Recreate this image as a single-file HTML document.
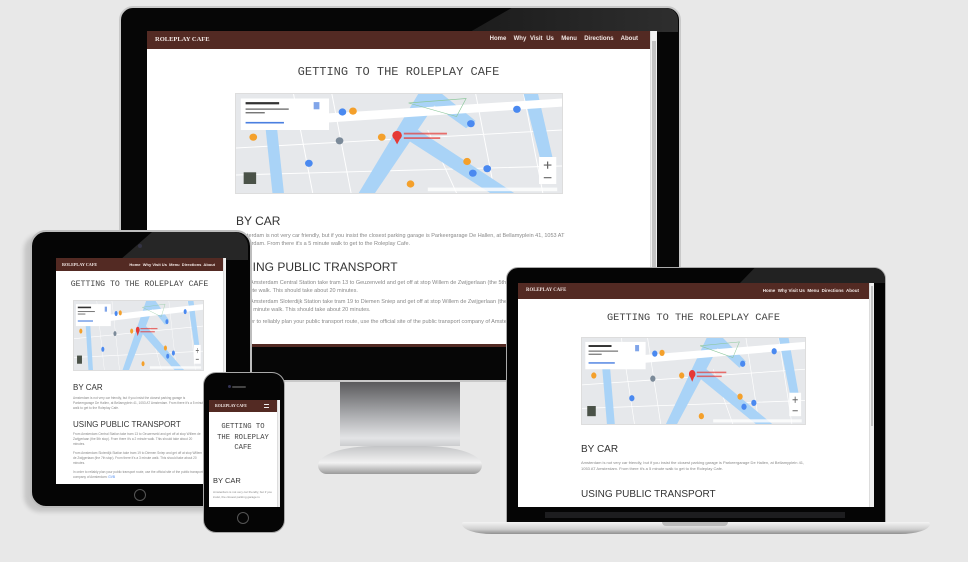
<!DOCTYPE html>
<html><head><meta charset="utf-8">
<style>
*{margin:0;padding:0;box-sizing:border-box}
html,body{width:968px;height:562px;overflow:hidden;background:#e8e8e8;font-family:"Liberation Sans",sans-serif}
.abs{position:absolute}
.scr{position:absolute;background:#fff;overflow:hidden}
.nav{position:absolute;left:0;top:0;right:0;background:#532a23;color:#f3e9e6}
.brand{position:absolute;font-family:"Liberation Serif",serif;font-weight:bold;white-space:nowrap}
.links{position:absolute;white-space:nowrap;font-weight:bold}
.ttl{position:absolute;left:0;right:0;text-align:center;font-family:"Liberation Mono",monospace;color:#444;white-space:nowrap}
.h{position:absolute;color:#333;white-space:nowrap}
.p{position:absolute;color:#888;line-height:1.4;overflow:hidden}
.map{position:absolute;border:1px solid #ddd}
.sb{position:absolute;right:0;top:0;bottom:0;background:#f0f0f0;border-left:1px solid #ddd}
.sb i{position:absolute;left:1px;right:1px;top:10px;background:#c2c2c2;display:block}
</style></head><body>

<svg width="0" height="0" style="position:absolute">
<defs>
<symbol id="map" viewBox="0 0 340 110" preserveAspectRatio="none">
<rect width="340" height="110" fill="#e6e8eb"/>
<g stroke="#fff" stroke-width="1" fill="none">
<path d="M0 60 L340 40 M60 0 L80 110 M250 0 L270 110 M0 90 L340 80 M100 0 L120 110 M300 0 L320 110 M200 40 L230 110"/>
</g>
<path d="M128 110 L145 110 L215 0 L190 0 Z" fill="#a9d3f7"/>
<path d="M190 0 L215 0 L250 30 L240 38 Z" fill="#a9d3f7"/>
<path d="M170 45 L190 40 L290 110 L265 110 Z" fill="#a9d3f7"/>
<path d="M300 0 L315 0 L330 70 L318 75 Z" fill="#a9d3f7"/>
<path d="M30 30 L42 30 L50 110 L38 110 Z" fill="#a9d3f7"/>
<path d="M90 22 L340 5 L340 14 L92 32 Z" fill="#fff"/>
<path d="M180 10 L240 5 L230 25 Z" fill="none" stroke="#8bc79a" stroke-width=".7"/>
<rect x="5" y="5" width="92" height="35" fill="#fff"/>
<rect x="10" y="9" width="35" height="2.5" fill="#333"/>
<rect x="10" y="16" width="45" height="1.6" fill="#777"/>
<rect x="10" y="20" width="20" height="1.6" fill="#777"/>
<rect x="10" y="31" width="40" height="1.8" fill="#4a7fe0"/>
<rect x="81" y="9" width="6" height="8" fill="#4a7fe0" opacity=".7"/>
<circle cx="168" cy="46" r="5" fill="#e53935"/><path d="M164 48 L168 56 L172 48Z" fill="#e53935"/>
<rect x="175" y="43" width="45" height="2" fill="#e53935" opacity=".7"/><rect x="175" y="48" width="38" height="2" fill="#e53935" opacity=".7"/>
<circle cx="152" cy="48" r="4" fill="#f4a02b"/><circle cx="122" cy="19" r="4" fill="#f4a02b"/><circle cx="18" cy="48" r="4" fill="#f4a02b"/><circle cx="241" cy="75" r="4" fill="#f4a02b"/><circle cx="182" cy="100" r="4" fill="#f4a02b"/>
<circle cx="108" cy="52" r="4" fill="#7b8a99"/>
<circle cx="245" cy="33" r="4" fill="#4a89f0"/><circle cx="293" cy="17" r="4" fill="#4a89f0"/><circle cx="247" cy="88" r="4" fill="#4a89f0"/><circle cx="76" cy="77" r="4" fill="#4a89f0"/><circle cx="262" cy="83" r="4" fill="#4a89f0"/><circle cx="111" cy="20" r="4" fill="#4a89f0"/>
<rect x="8" y="87" width="13" height="13" fill="#4a5248"/>
<rect x="316" y="70" width="18" height="30" fill="#fff"/>
<path d="M321 79 h8 M325 75 v8 M321 93 h8" stroke="#666" stroke-width="1.3"/>
<rect x="200" y="104" width="135" height="4" fill="#fff" opacity=".8"/>
</symbol>
</defs>
</svg>

<!-- MONITOR -->
<div class="abs" style="left:119px;top:6px;width:562px;height:376px;background:#060606;border-radius:14px;border:2px solid #c9c9c9"></div>
<div class="abs" style="left:470px;top:8px;width:208px;height:24px;background:linear-gradient(90deg,#1c1c1c,#2e2e2e);clip-path:polygon(20% 0,100% 0,100% 100%,0 100%);border-top-right-radius:12px"></div>
<div class="abs" style="left:340px;top:382px;width:120px;height:80px;background:linear-gradient(180deg,#5a5a5c,#a9aaad 40%,#e3e4e6 70%,#9b9c9e);clip-path:polygon(0 0,100% 0,104% 80%,0 80%)"></div>
<div class="abs" style="left:318px;top:446px;width:164px;height:28px;background:linear-gradient(180deg,#c4c5c7,#f2f2f2 60%,#9a9a9a);border-radius:40% 40% 10px 10px/80% 80% 10px 10px"></div>

<div class="scr" style="left:147px;top:31px;width:510px;height:316px">
 <div class="nav" style="height:18px;right:7px">
  <div class="brand" style="left:8px;top:5px;font-size:6.5px">ROLEPLAY CAFE</div>
  <div class="links" style="right:12px;top:5px;font-size:6px;word-spacing:2px">Home&nbsp; Why Visit Us&nbsp; Menu&nbsp; Directions&nbsp; About</div>
 </div>
 <div class="sb" style="width:7px"><i style="top:10px;bottom:10px"></i></div>
 <div class="ttl" style="top:34px;font-size:12px;right:7px">GETTING TO THE ROLEPLAY CAFE</div>
 <svg class="map" style="left:88px;top:62px;width:328px;height:101px"><use href="#map"/></svg>
 <div class="h" style="left:89px;top:183px;font-size:12px">BY CAR</div>
 <div class="p" style="left:89px;top:202px;width:330px;font-size:5.5px">Amsterdam is not very car friendly, but if you insist the closest parking garage is Parkeergarage De Hallen, at Bellamyplein 41, 1053 AT Amsterdam. From there it's a 5 minute walk to get to the Roleplay Cafe.</div>
 <div class="h" style="left:89px;top:229px;font-size:12px">USING PUBLIC TRANSPORT</div>
 <div class="p" style="left:89px;top:249px;width:330px;font-size:5.5px">From Amsterdam Central Station take tram 13 to Geuzenveld and get off at stop Willem de Zwijgerlaan (the 5th stop). From there it's a 2 minute walk. This should take about 20 minutes.</div>
 <div class="p" style="left:89px;top:268px;width:330px;font-size:5.5px">From Amsterdam Sloterdijk Station take tram 19 to Diemen Sniep and get off at stop Willem de Zwijgerlaan (the 7th stop). From there it's a 3 minute walk. This should take about 20 minutes.</div>
 <div class="p" style="left:89px;top:288px;width:340px;font-size:5.5px">In order to reliably plan your public transport route, use the official site of the public transport company of Amsterdam: GVB</div>
 <div class="abs" style="left:0;right:0;bottom:0;height:3px;background:#532a23"></div>
</div>

<!-- TABLET -->
<div class="abs" style="left:30px;top:230px;width:222px;height:278px;background:#050505;border-radius:16px;border:2px solid #bdbdbd;box-shadow:-6px 4px 4px rgba(0,0,0,.15)"></div>
<div class="abs" style="left:120px;top:232px;width:128px;height:28px;background:#262626;clip-path:polygon(25% 0,100% 0,100% 100%,0 100%);border-top-right-radius:14px"></div>
<div class="abs" style="left:138px;top:244px;width:4px;height:4px;border-radius:50%;background:#334"></div>
<div class="abs" style="left:134px;top:489px;width:12px;height:12px;border-radius:50%;border:1px solid #555"></div>
<div class="scr" style="left:56px;top:258px;width:170px;height:226px">
 <div class="nav" style="height:13px;right:3px">
  <div class="brand" style="left:6px;top:4px;font-size:4.2px">ROLEPLAY CAFE</div>
  <div class="links" style="right:8px;top:4px;font-size:4px">Home&nbsp; Why Visit Us&nbsp; Menu&nbsp; Directions&nbsp; About</div>
 </div>
 <div class="sb" style="width:3px"><i style="top:4px;height:100px"></i></div>
 <div class="ttl" style="top:22px;font-size:8.2px;right:3px">GETTING TO THE ROLEPLAY CAFE</div>
 <svg class="map" style="left:17px;top:42px;width:131px;height:71px"><use href="#map"/></svg>
 <div class="h" style="left:17px;top:125px;font-size:8px">BY CAR</div>
 <div class="p" style="left:17px;top:138px;width:132px;font-size:3.2px;line-height:1.6">Amsterdam is not very car friendly, but if you insist the closest parking garage is Parkeergarage De Hallen, at Bellamyplein 41, 1053 AT Amsterdam. From there it's a 5 minute walk to get to the Roleplay Cafe.</div>
 <div class="h" style="left:17px;top:162px;font-size:8px">USING PUBLIC TRANSPORT</div>
 <div class="p" style="left:17px;top:174px;width:132px;font-size:3.2px;line-height:1.6">From Amsterdam Central Station take tram 13 to Geuzenveld and get off at stop Willem de Zwijgerlaan (the 5th stop). From there it's a 2 minute walk. This should take about 20 minutes.</div>
 <div class="p" style="left:17px;top:193px;width:132px;font-size:3.2px;line-height:1.6">From Amsterdam Sloterdijk Station take tram 19 to Diemen Sniep and get off at stop Willem de Zwijgerlaan (the 7th stop). From there it's a 3 minute walk. This should take about 20 minutes.</div>
 <div class="p" style="left:17px;top:212px;width:132px;font-size:3.2px;line-height:1.6">In order to reliably plan your public transport route, use the official site of the public transport company of Amsterdam: <span style="color:#4a89f0">GVB</span></div>
</div>

<!-- PHONE -->
<div class="abs" style="left:203px;top:372px;width:82px;height:161px;background:#050505;border-radius:13px;border:1.5px solid #aaa"></div>
<div class="abs" style="left:232px;top:386px;width:14px;height:2px;border-radius:1px;background:#444"></div>
<div class="abs" style="left:228px;top:385px;width:3px;height:3px;border-radius:50%;background:#335"></div>
<div class="abs" style="left:237px;top:512px;width:12px;height:12px;border-radius:50%;border:1px solid #555"></div>
<div class="scr" style="left:209px;top:400px;width:71px;height:107px">
 <div class="nav" style="height:12px;right:3px">
  <div class="brand" style="left:6px;top:4px;font-size:3.8px">ROLEPLAY CAFE</div>
  <div class="abs" style="right:8px;top:4px;width:5px;height:4px;border-top:1px solid #eee;border-bottom:1px solid #eee"></div>
 </div>
 <div class="sb" style="width:3px"><i style="top:2px;height:30px"></i></div>
 <div class="ttl" style="top:22px;font-size:7.2px;line-height:10.5px;white-space:normal;padding:0 8px;right:3px">GETTING TO THE ROLEPLAY CAFE</div>
 <div class="h" style="left:4px;top:76px;font-size:7.5px">BY CAR</div>
 <div class="p" style="left:4px;top:90px;width:60px;font-size:3px;line-height:1.7">Amsterdam is not very car friendly, but if you insist, the closest parking garage is</div>
</div>

<!-- LAPTOP -->
<div class="abs" style="left:506px;top:267px;width:380px;height:258px;background:#050505;border-radius:12px 12px 0 0;border:1px solid #aaa"></div>
<div class="abs" style="left:740px;top:268px;width:145px;height:15px;background:#222;clip-path:polygon(10% 0,100% 0,100% 100%,0 100%);border-top-right-radius:11px"></div>
<div class="abs" style="left:545px;top:512px;width:300px;height:6px;background:#1d1d1f"></div>
<div class="abs" style="left:462px;top:522px;width:468px;height:12px;background:linear-gradient(180deg,#f4f4f4,#cfcfcf 60%,#8f8f8f);border-radius:2px 2px 30px 30px/2px 2px 10px 10px"></div>
<div class="abs" style="left:662px;top:522px;width:66px;height:4px;background:#bbb;border-radius:0 0 4px 4px"></div>
<div class="scr" style="left:518px;top:283px;width:356px;height:224px">
 <div class="nav" style="height:16px;right:5px">
  <div class="brand" style="left:8px;top:5px;font-size:4.8px">ROLEPLAY CAFE</div>
  <div class="links" style="right:10px;top:5px;font-size:4.5px">Home&nbsp; Why Visit Us&nbsp; Menu&nbsp; Directions&nbsp; About</div>
 </div>
 <div class="sb" style="width:5px"><i style="top:3px;height:140px"></i></div>
 <div class="ttl" style="top:29px;font-size:10.3px;right:5px">GETTING TO THE ROLEPLAY CAFE</div>
 <svg class="map" style="left:63px;top:54px;width:225px;height:88px"><use href="#map"/></svg>
 <div class="h" style="left:63px;top:161px;font-size:10px">BY CAR</div>
 <div class="p" style="left:63px;top:177px;width:228px;font-size:4px;line-height:1.6">Amsterdam is not very car friendly, but if you insist the closest parking garage is Parkeergarage De Hallen, at Bellamyplein 41, 1053 AT Amsterdam. From there it's a 5 minute walk to get to the Roleplay Cafe.</div>
 <div class="h" style="left:63px;top:206px;font-size:10px">USING PUBLIC TRANSPORT</div>
</div>

</body></html>
